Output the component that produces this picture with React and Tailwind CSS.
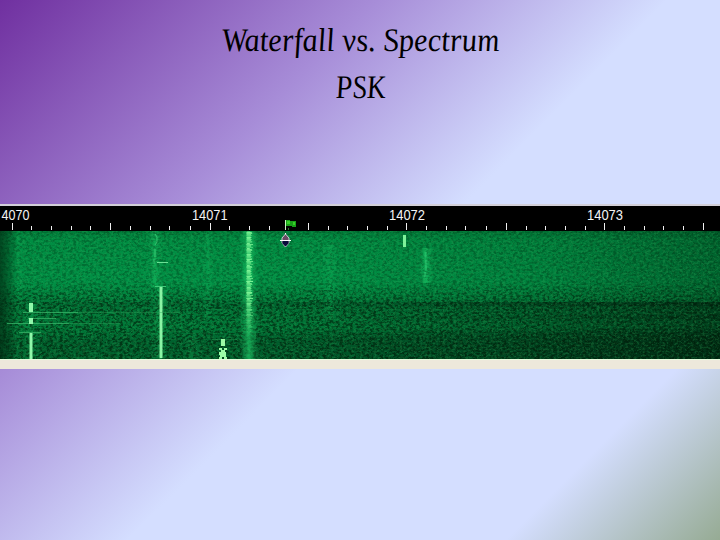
import React from 'react';

// --- Scale data (x positions in px along the strip) ---
const MAJOR_TICKS = [12, 110, 210, 308, 406, 506, 604, 703];
const MINOR_TICKS = [
    31, 51, 71, 90, 130, 150, 169, 190, 229, 249, 269, 328, 347, 367, 387,
    426, 446, 465, 486, 526, 545, 565, 585, 624, 644, 663, 683,
];

const LABELS = [
    { text: '4070', x: 1.5, width: 28 },
    { text: '14071', x: 192, width: 35.5 },
    { text: '14072', x: 389, width: 36 },
    { text: '14073', x: 587, width: 36 },
];

// bright speckle along the strong PSK carrier
const CARRIER = Array.from({ length: 128 }, (_, i) => {
    const r = ((i * 7919 + 13 * i * i) % 17) / 17;
    const fade = i < 66 ? 1 : Math.max(0.04, 1 - (i - 66) * 0.024);
    return { y: i, w: 3 + r * 4, dx: (r - 0.5) * 1.4, o: (0.4 + ((i * 31) % 11) / 20) * fade };
});

// --- FrequencyScale Component ---
const FrequencyScale = () => (
    <svg className="block" width="720" height="25" viewBox="0 0 720 25">
        <rect width="720" height="25" fill="#000" />
        {LABELS.map(({ text, x, width }) => (
            <text
                key={text}
                x={x}
                y="14"
                textLength={width}
                lengthAdjust="spacingAndGlyphs"
                fontSize="14.5"
                fill="#f4f4f4"
                className="font-['Liberation_Sans',sans-serif]"
            >
                {text}
            </text>
        ))}
        <g fill="#f0f0f0" shapeRendering="crispEdges">
            {MAJOR_TICKS.map((x) => <rect key={x} x={x} y="17" width="1" height="7" />)}
            {MINOR_TICKS.map((x) => <rect key={x} x={x} y="20" width="1" height="4" />)}
        </g>
        {/* flag */}
        <rect x="285" y="14" width="1" height="10" fill="#c8f5c0" />
        <path d="M286 14h4v1h6v6h-4v-1h-6z" fill="#18a018" />
        <path d="M287 15h3v3h-3zM293 16h2v3h-2z" fill="#38d028" />
        <rect x="288" y="22" width="1" height="2" fill="#2a7a2a" />
    </svg>
);

// --- Waterfall Component ---
const Waterfall = () => (
    <svg className="block" width="720" height="128" viewBox="0 0 720 128">
        <defs>
            <linearGradient id="base" x1="0" y1="0" x2="0" y2="1">
                <stop offset="0" stopColor="#007a38" />
                <stop offset="0.06" stopColor="#008c42" />
                <stop offset="0.4" stopColor="#009045" />
                <stop offset="0.53" stopColor="#007d3b" />
                <stop offset="0.57" stopColor="#007035" />
                <stop offset="0.66" stopColor="#007a39" />
                <stop offset="0.78" stopColor="#007a39" />
                <stop offset="0.86" stopColor="#006630" />
                <stop offset="1" stopColor="#006630" />
            </linearGradient>
            <linearGradient id="fadeRight" x1="0" y1="0" x2="1" y2="0">
                <stop offset="0.45" stopColor="#001c0a" stopOpacity="0" />
                <stop offset="0.75" stopColor="#001c0a" stopOpacity="0.12" />
                <stop offset="1" stopColor="#001c0a" stopOpacity="0.36" />
            </linearGradient>
            <linearGradient id="fadeBottom" x1="0" y1="0" x2="1" y2="0">
                <stop offset="0.3" stopColor="#001208" stopOpacity="0.03" />
                <stop offset="0.6" stopColor="#001208" stopOpacity="0.15" />
                <stop offset="1" stopColor="#001208" stopOpacity="0.32" />
            </linearGradient>
            <linearGradient id="fadeLeft" x1="0" y1="0" x2="1" y2="0">
                <stop offset="0" stopColor="#002a12" stopOpacity="0.7" />
                <stop offset="0.4" stopColor="#002a12" stopOpacity="0.45" />
                <stop offset="1" stopColor="#002a12" stopOpacity="0" />
            </linearGradient>
            <linearGradient id="glow" x1="0" y1="0" x2="1" y2="0">
                <stop offset="0" stopColor="#20c868" stopOpacity="0" />
                <stop offset="0.5" stopColor="#20d870" stopOpacity="0.85" />
                <stop offset="1" stopColor="#20c868" stopOpacity="0" />
            </linearGradient>
            <filter id="darkNoise" x="0" y="0" width="100%" height="100%" colorInterpolationFilters="sRGB">
                <feTurbulence type="fractalNoise" baseFrequency="0.3 0.42" numOctaves="3" seed="4" />
                <feColorMatrix values="0 0 0 0 0  0 0 0 0 0.1  0 0 0 0 0.03  4.5 0 0 0 -1.95" />
            </filter>
            <filter id="lightNoise" x="0" y="0" width="100%" height="100%" colorInterpolationFilters="sRGB">
                <feTurbulence type="fractalNoise" baseFrequency="0.35 0.5" numOctaves="3" seed="11" />
                <feColorMatrix values="0 0 0 0 0.2  0 0 0 0 0.68  0 0 0 0 0.36  0 5 0 0 -2.4" />
            </filter>
            <linearGradient id="rampDown" x1="0" y1="0" x2="0" y2="1">
                <stop offset="0" stopColor="#fff" stopOpacity="0" />
                <stop offset="0.28" stopColor="#fff" />
                <stop offset="1" stopColor="#fff" />
            </linearGradient>
            <mask id="lowerHalf">
                <rect y="50" width="720" height="78" fill="url(#rampDown)" />
            </mask>
        </defs>

        <rect width="720" height="128" fill="url(#base)" />
        <rect width="720" height="128" fill="url(#fadeRight)" />
        <rect y="71" width="720" height="57" fill="url(#fadeBottom)" />
        <rect y="98" width="720" height="30" fill="url(#fadeBottom)" opacity="0.5" />
        <rect y="101" width="720" height="27" fill="url(#fadeBottom)" opacity="0.5" />
        <rect y="71" width="720" height="4" fill="url(#fadeBottom)" />
        <rect y="84" width="720" height="4" fill="url(#fadeBottom)" opacity="0.6" />

        {/* faint carriers */}
        <rect x="12" width="12" height="128" fill="url(#glow)" opacity="0.12" />
        <rect x="148" width="14" height="56" fill="url(#glow)" opacity="0.45" />
        <rect x="150" y="54" width="20" height="74" fill="url(#glow)" opacity="0.3" />
        <rect x="203" width="10" height="86" fill="url(#glow)" opacity="0.2" />
        <rect x="322" y="14" width="16" height="76" fill="url(#glow)" opacity="0.2" />
        <rect x="419" y="17" width="14" height="35" fill="url(#glow)" opacity="0.6" />
        <rect x="20" y="70" width="22" height="58" fill="url(#glow)" opacity="0.25" />
        <rect x="183" y="104" width="20" height="24" fill="url(#glow)" opacity="0.2" />

        <rect width="720" height="128" filter="url(#darkNoise)" opacity="0.27" />
        <g mask="url(#lowerHalf)">
            <rect width="720" height="128" filter="url(#darkNoise)" opacity="0.42" />
        </g>
        <rect width="720" height="128" filter="url(#lightNoise)" opacity="0.24" />
        <rect width="18" height="128" fill="url(#fadeLeft)" />

        {/* strong carrier */}
        <rect x="240" width="18" height="128" fill="url(#glow)" opacity="0.7" />
        {CARRIER.map(({ y, w, dx, o }) => (
            <rect key={y} x={249 - w / 2 + dx} y={y} width={w} height="1" fill="#86fa9a" opacity={o} />
        ))}

        {/* traces */}
        <path d="M155 3l2 3v5l-2 3M155 18v8M154 28v5" stroke="#4cd884" fill="none" opacity="0.6" />
        <path d="M157 31.5h11" stroke="#6be095" />
        <path d="M155 55.5h11" stroke="#3ccb77" />
        <rect x="159.5" y="56" width="3" height="71" fill="#8af5a5" />
        <path d="M23 81.5h55M7 92.500h62M19 101.500h22M28 87.500h28" stroke="#3dbb6d" opacity="0.7" />
        <path d="M60 81.5h120M60 92.500h60M212 108.500h25" stroke="#2da55b" opacity="0.4" />
        <path d="M29 72h4v9h-4zM29 87h4v6h-4zM29.500 102h3v26h-3z" fill="#90f8aa" />
        <path d="M403 4h3v12h-3z" fill="#7ef29a" />
        <path d="M221 108h4v7h-4zM219 117h3v2h-3zM224 117h3v2h-3zM221 119h4v2h-4zM219 121h7v3h-7zM220 124h6v2h-6zM219 126h3v2h-3zM224 126h3v2h-3z" fill="#9cfba6" />
        <path d="M425.500 21v6M426 29v10M425 41v5" stroke="#35d47d" strokeWidth="2" opacity="0.4" />

        {/* tuning cursor */}
        <path d="M285.500 2v14" stroke="#f5f5f5" />
        <path d="M285.500 3l3.500 4v5l-3.500 4-3.500-4V7z" fill="#6a4a64" stroke="#e8e8f0" strokeWidth="0.8" />
        <path d="M282.500 10h6v2.500l-3 3-3-3z" fill="#080b3a" />
        <path d="M280 9.500h11" stroke="#fff" />
    </svg>
);

const App = () => (
    <div className="flex flex-col w-[720px] h-[540px] overflow-hidden bg-[linear-gradient(135deg,#7030a0_0%,#a78dd8_30%,#d4deff_53%,#d4deff_83%,#96ab94_100%)]">
        <header className="h-[204px] shrink-0 pt-[17px] text-center text-black font-['Liberation_Serif',serif] italic text-[33px] leading-[47px]">
            <h1 className="flex flex-col items-center">
                <span className="inline-block [transform:scaleX(0.93)_skewX(6deg)]">Waterfall vs. Spectrum</span>
                <span className="inline-block [transform:scaleX(0.84)_skewX(6deg)]">PSK</span>
            </h1>
        </header>
        <section className="shrink-0 border-t-2 border-[#d2cfd8]">
            <FrequencyScale />
            <Waterfall />
            <div className="h-[10px] bg-[#ede8db] border-t border-[#e6fbdc]" />
        </section>
    </div>
);

export default App;
